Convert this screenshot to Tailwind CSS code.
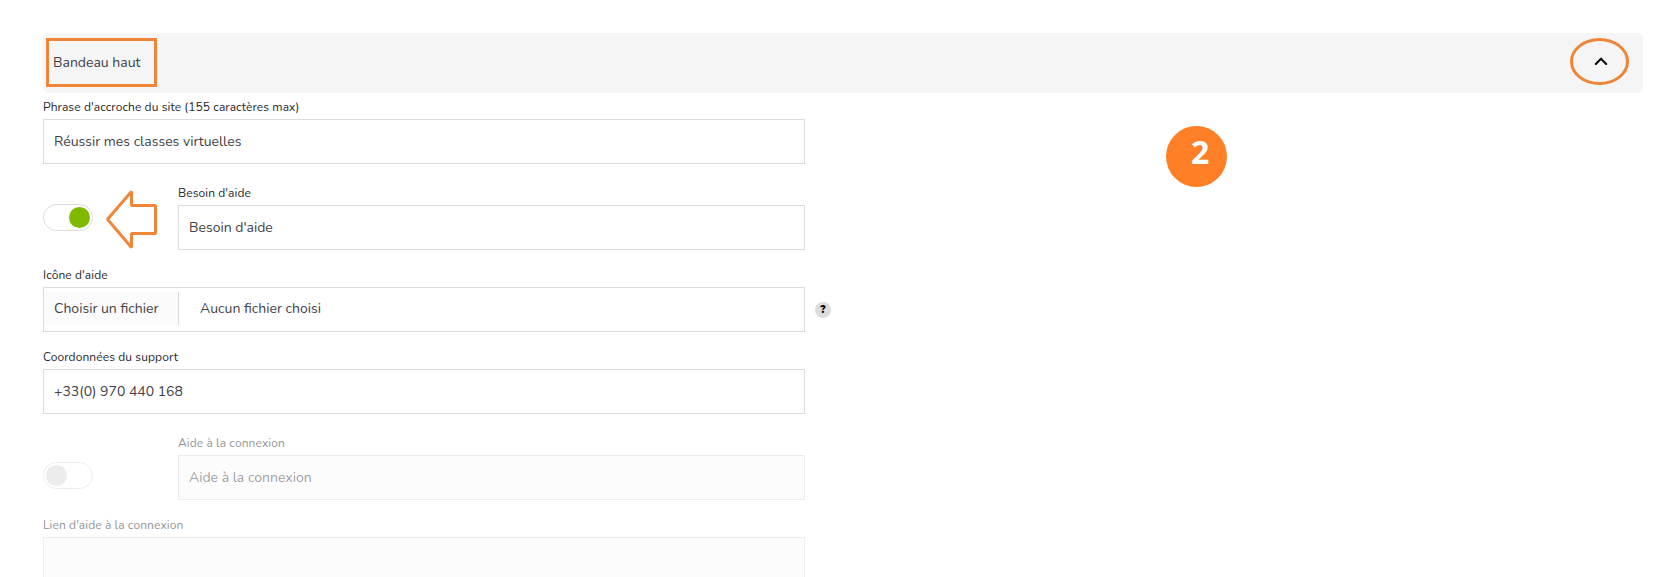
<!DOCTYPE html>
<html lang="fr">
<head>
    <meta charset="UTF-8">
    <meta name="viewport" content="width=device-width, initial-scale=1.0">
    <title>Bandeau haut</title>
    <script src="https://cdn.jsdelivr.net/npm/@tailwindcss/browser@4"></script>
</head>
<body class="relative h-[577px] overflow-hidden bg-white pt-[33px] pl-[43px] pr-4 font-[Nunito,Lato,sans-serif] text-[#26282d]">
    <header class="flex h-[60px] items-start justify-between rounded-[5px] bg-[#f5f5f5] pt-[5px] pr-[13px] pl-[3px]">
        <h1 class="flex h-[49px] w-[111px] items-center border-3 border-[#f08437] pl-1 text-sm text-[#3f4248]">Bandeau haut</h1>
        <button type="button" aria-label="Replier">
            <svg class="block h-[48px] w-[60px]" viewBox="0 0 60 48" fill="none">
                <ellipse cx="29.5" cy="23.5" rx="28" ry="22" stroke="#f08437" stroke-width="3"/>
                <path d="M25.8 26L31 20.8L36.2 26" stroke="#111" stroke-width="2.2" stroke-linecap="round"/>
            </svg>
        </button>
    </header>

    <form class="w-[762px] pt-1.5">
        <div class="mb-[21px]">
            <label for="phrase" class="mb-1 block text-xs/4 tracking-[0.09px]">Phrase d'accroche du site (155 caractères max)</label>
            <input id="phrase" type="text" value="Réussir mes classes virtuelles" class="block h-[45px] w-full border border-[#dcdcdc] px-[10px] text-sm text-[#3f4248]">
        </div>

        <div class="mb-[17px] flex">
            <div class="w-[135px] pt-[19px]">
                <div class="flex h-[27px] w-[50px] items-center justify-end rounded-full border border-[#dcdcdc] pr-0.5">
                    <span class="size-[21px] rounded-full bg-[#80ba00]"></span>
                </div>
            </div>
            <div class="flex-1">
                <label for="besoin" class="mb-1 block text-xs/4 tracking-[0.09px]">Besoin d'aide</label>
                <input id="besoin" type="text" value="Besoin d'aide" class="block h-[45px] w-full border border-[#dcdcdc] px-[10px] text-sm text-[#3f4248]">
            </div>
        </div>

        <div class="relative mb-[17px]">
            <span class="mb-1 block text-xs/4 tracking-[0.09px]">Icône d'aide</span>
            <div class="flex h-[45px] items-start border border-[#dcdcdc] pt-1 text-sm/[33px] text-[#3f4248]">
                <span class="h-[33px] w-[135px] border-r border-[#dcdcdc] bg-[#fbfbfb] pl-[10px]">Choisir un fichier</span>
                <span class="pl-[21px]">Aucun fichier choisi</span>
            </div>
            <span class="absolute top-[35px] left-[772px] flex size-4 items-center justify-center rounded-full bg-[#dcdcdc] text-[11px] font-black text-black">?</span>
        </div>

        <div class="mb-[21px]">
            <label for="support" class="mb-1 block text-xs/4 tracking-[0.09px]">Coordonnées du support</label>
            <input id="support" type="text" value="+33(0) 970 440 168" class="block h-[45px] w-full border border-[#dcdcdc] px-[10px] text-sm text-[#3f4248]">
        </div>

        <div class="mb-[17px] flex opacity-50">
            <div class="w-[135px] pt-[27px]">
                <div class="flex h-[27px] w-[50px] items-center rounded-full border border-[#dcdcdc] pl-0.5">
                    <span class="size-[21px] rounded-full bg-[#dadada]"></span>
                </div>
            </div>
            <div class="flex-1">
                <label for="aide" class="mb-1 block text-xs/4 tracking-[0.09px]">Aide à la connexion</label>
                <input id="aide" type="text" value="Aide à la connexion" disabled class="block h-[45px] w-full border border-[#dcdcdc] bg-[#fbfbfb] px-[10px] text-sm text-[#3f4248]">
            </div>
        </div>

        <div class="opacity-50">
            <label for="lien" class="mb-1 block text-xs/4 tracking-[0.09px]">Lien d'aide à la connexion</label>
            <input id="lien" type="text" disabled class="block h-[45px] w-full border border-[#dcdcdc] bg-[#fbfbfb] px-[10px] text-sm">
        </div>
    </form>

    <!-- Annotations -->
    <svg class="absolute top-[187px] left-[103px] h-[66px] w-[58px]" viewBox="0 0 58 66" fill="none">
        <path d="M4.5 32.3L28.5 4.5V18.5H52.5V46.5H28.5V60.5Z" stroke="#f08437" stroke-width="3" stroke-linejoin="bevel"/>
    </svg>
    <div class="absolute top-[126px] left-[1166px] size-[61px] rounded-full bg-[#ff7f27] pt-1 pl-[25px] font-['Open_Sans'] text-[32px]/[44px] font-bold text-white">2</div>
</body>
</html>
